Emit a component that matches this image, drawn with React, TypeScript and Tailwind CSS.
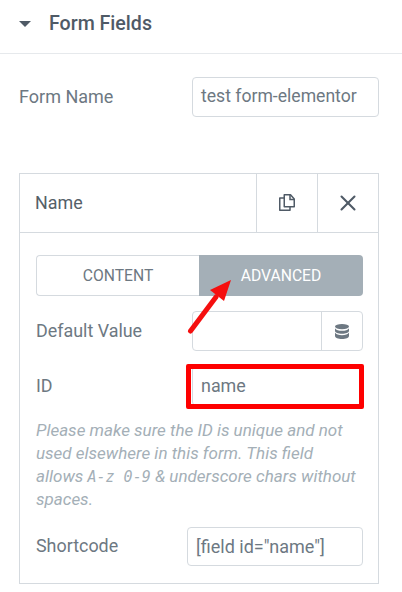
import { X } from "lucide-react";

const CopyIcon = () => (
  <svg className="-mt-[2px]" width="16" height="17" viewBox="0 0 16 17" fill="none" stroke="#4f5a66" strokeWidth="1.5">
    <path d="M5.25 0.75V12.75H15.25V5L11.5 0.75H5.25Z" strokeLinejoin="round" />
    <path d="M11 1V5.5H15" />
    <path d="M5 4H0.75V16.25H11V12.75" strokeLinejoin="round" />
  </svg>
);

const DatabaseIcon = () => (
  <svg width="14" height="15" viewBox="0 0 14 15" fill="#6d7882">
    <ellipse cx="7" cy="2.6" rx="7" ry="2.6" />
    <path d="M0 4.2C1 6 3.8 6.8 7 6.8S13 6 14 4.2V7C14 8.6 10.9 9.8 7 9.8S0 8.6 0 7Z" />
    <path d="M0 8.6C1 10.4 3.8 11.2 7 11.2S13 10.4 14 8.6V12C14 13.7 10.9 15 7 15S0 13.7 0 12Z" />
  </svg>
);

const Row = ({ label, children, className }: { label: string; children: React.ReactNode; className: string }) => (
  <div className={"flex items-center justify-between " + className}>
    <span className="text-[17.9px] text-[#6d7882]">{label}</span>
    {children}
  </div>
);

export default function App() {
  return (
    <main className="relative h-[592px] w-[402px] overflow-hidden bg-white font-['Roboto',sans-serif]">
      <header className="flex h-[54px] items-center gap-[18px] border-b border-[#e6e9ec] pb-[5px] pl-[19px]">
        <span className="h-0 w-0 border-x-[6px] border-t-[6px] border-x-transparent border-t-[#4f5a66]" />
        <h2 className="text-[19.6px] font-medium text-[#4f5a66]">Form Fields</h2>
      </header>

      <div className="mt-[23px] flex h-[40px] w-[379px] items-center justify-between pl-[19px]">
        <span className="-mt-[2px] text-[18px] text-[#6d7882]">Form Name</span>
        <div className="flex h-[40px] w-[187px] items-center rounded-[4px] border border-[#d5dadf] pb-[1px] pl-[8px] text-[17.6px] text-[#6d7882]">
          test form-elementor
        </div>
      </div>

      <section className="ml-[19px] mt-[56px] h-[411px] w-[360px] border border-[#d5dadf]">
        <div className="flex h-[59px] border-b border-[#d5dadf]">
          <span className="flex flex-1 items-center pl-[15px] text-[17.9px] text-[#556068]">Name</span>
          <span className="flex w-[61px] items-center justify-center border-l border-[#d5dadf]">
            <CopyIcon />
          </span>
          <span className="flex w-[61px] items-center justify-center border-l border-[#d5dadf]">
            <X size={26} strokeWidth={1.9} color="#4f5a66" />
          </span>
        </div>

        <div className="px-[16px] pt-[22px]">
          <div className="flex h-[41px] w-[327px] text-[15.7px]">
            <div className="flex w-[163px] items-center justify-center rounded-l-[4px] border border-r-0 border-[#d5dadf] text-[#6d7882]">
              CONTENT
            </div>
            <div className="flex flex-1 items-center justify-center rounded-r-[4px] bg-[#a4afb7] text-white">
              ADVANCED
            </div>
          </div>

          <Row label="Default Value" className="mt-[15px] h-[40px] w-[327px]">
            <div className="flex h-[40px] w-[171px] justify-end rounded-[4px] border border-[#d5dadf]">
              <span className="flex w-[41px] items-center justify-center border-l border-[#d5dadf]">
                <DatabaseIcon />
              </span>
            </div>
          </Row>

          <Row label="ID" className="mt-[13px] h-[44px] w-[327px]">
            <div className="flex h-[40px] w-[171px] items-center rounded-[4px] border border-[#d5dadf] pl-[8px] text-[17.9px] text-[#6d7882]">
              name
            </div>
          </Row>

          <p className="mt-[11px] w-[322px] text-[17px] italic leading-[23px] text-[#a4afb7]">
            Please make sure the ID is unique and not used elsewhere in this form. This field allows{" "}
            <code className="whitespace-nowrap font-['DejaVu_Sans_Mono',monospace] text-[15px] leading-none">A-z 0-9</code> &amp;
            underscore chars without spaces.
          </p>

          <Row label="Shortcode" className="mt-[16px] h-[39px] w-[327px]">
            <div className="flex h-[39px] w-[176px] items-center rounded-[4px] border border-[#d5dadf] pl-[8px] text-[18px] text-[#6d7882]">
              [field id="name"]
            </div>
          </Row>
        </div>
      </section>

      {/* annotations drawn over the screenshot */}
      <div className="absolute left-[186px] top-[364px] h-[45px] w-[178px] rounded-[2px] border-[5px] border-[#fe0000]" />
      <svg className="absolute left-[186px] top-[276px]" width="50" height="60" viewBox="0 0 50 60">
        <path d="M4.5 55L30 21" stroke="#f50f0f" strokeWidth="5" strokeLinecap="round" />
        <path d="M45 4L24 14L38 25Z" fill="#f50f0f" />
      </svg>
    </main>
  );
}
